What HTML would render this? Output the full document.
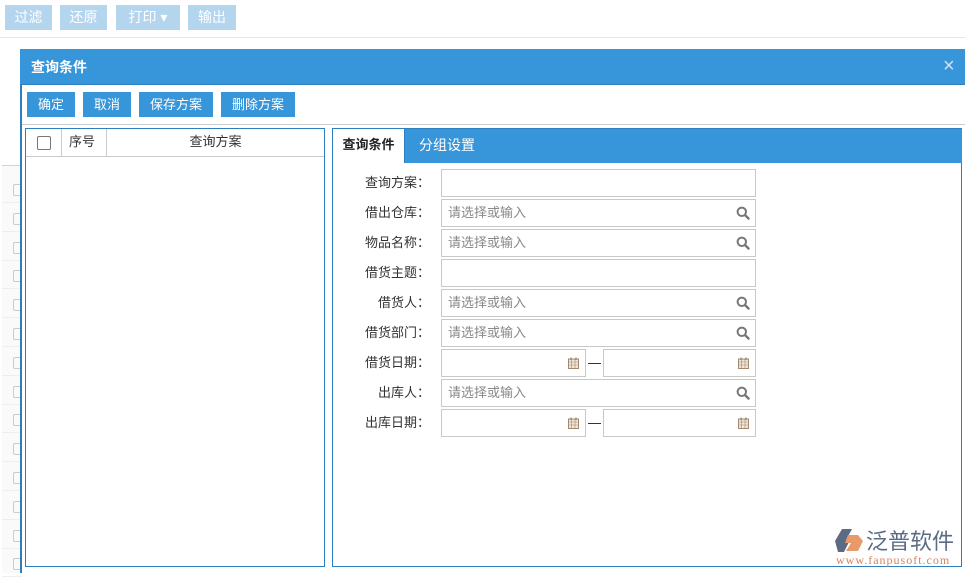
<!DOCTYPE html>
<html><head><meta charset="utf-8"><style>
*{box-sizing:border-box;margin:0;padding:0}
body{width:965px;height:573px;overflow:hidden;background:#fff;position:relative;font-family:"Liberation Sans","Noto Sans CJK SC",sans-serif;font-size:13px;color:#333}
.a{position:absolute}
.tb{position:absolute;top:5px;height:25px;background:#b4d5ee;color:#fff;font-size:14px;line-height:25px;text-align:center}
.btn{position:absolute;top:92px;height:25px;background:#3795d9;color:#fff;font-size:13px;line-height:25px;text-align:center}
.lbl{position:absolute;left:340px;width:90px;text-align:right;font-size:13px;color:#333;line-height:28px}
.in{position:absolute;height:28px;border:1px solid #c8c8c8;background:#fff;color:#888;font-size:13px;line-height:26px;padding-left:6px}
.ic{position:absolute;right:5px;top:6px}
</style></head><body>
<div class="tb" style="left:5px;width:47px">过滤</div>
<div class="tb" style="left:60px;width:47px">还原</div>
<div class="tb" style="left:116px;width:64px">打印 ▾</div>
<div class="tb" style="left:188px;width:48px">输出</div>
<div class="a" style="left:0;top:37px;width:965px;height:1px;background:#e6e6e6"></div>
<div class="a" style="left:2px;top:165px;width:20px;height:408px;background:#fafafa;border-top:1px solid #bcd9ef"></div>
<div id="rows"></div>
<script>
var r='';for(var i=0;i<14;i++){var y=180+i*28.8;r+='<div class="a" style="left:13px;top:'+(y+4)+'px;width:9px;height:12px;border:1px solid #ccc;border-right:none;border-radius:2px 0 0 2px"></div><div class="a" style="left:2px;top:'+(y+22)+'px;width:20px;height:1px;background:#eee"></div>';}
document.getElementById('rows').innerHTML=r;
</script>
<div class="a" style="left:20px;top:49px;width:945px;height:524px;background:#fff;border-left:2px solid #2e7fc0"></div>
<div class="a" style="left:20px;top:49px;width:945px;height:36px;background:#3795d9;border-bottom:1px solid #2e7fc0"></div>
<div class="a" style="left:31px;top:57px;color:#fff;font-weight:bold;font-size:14px;line-height:20px">查询条件</div>
<div class="a" style="left:943px;top:55px;color:#cfe4f5;font-size:20px;line-height:22px">×</div>
<div class="btn" style="left:27px;width:48px">确定</div>
<div class="btn" style="left:83px;width:48px">取消</div>
<div class="btn" style="left:139px;width:74px">保存方案</div>
<div class="btn" style="left:221px;width:74px">删除方案</div>
<div class="a" style="left:22px;top:124px;width:943px;height:1px;background:#ccc"></div>
<div class="a" style="left:25px;top:128px;width:300px;height:439px;border:1px solid #2e7fc0"></div>
<div class="a" style="left:26px;top:156px;width:298px;height:1px;background:#ccc"></div>
<div class="a" style="left:61px;top:129px;width:1px;height:27px;background:#ccc"></div>
<div class="a" style="left:106px;top:129px;width:1px;height:27px;background:#ccc"></div>
<div class="a" style="left:37px;top:136px;width:14px;height:14px;border:1px solid #777;border-radius:2px"></div>
<div class="a" style="left:69px;top:133px;line-height:18px">序号</div>
<div class="a" style="left:107px;width:217px;top:133px;line-height:18px;text-align:center">查询方案</div>
<div class="a" style="left:332px;top:128px;width:630px;height:439px;border:1px solid #2e7fc0"></div>
<div class="a" style="left:333px;top:129px;width:629px;height:34px;background:#3795d9"></div>
<div class="a" style="left:333px;top:129px;width:72px;height:34px;background:#fff;border-right:1px solid #2e7fc0;font-weight:bold;text-align:center;line-height:32px;color:#222">查询条件</div>
<div class="a" style="left:419px;top:129px;color:#fff;font-size:14px;line-height:32px">分组设置</div>
<div id="f"></div>
<script>
var L=['查询方案','借出仓库','物品名称','借货主题','借货人','借货部门','借货日期','出库人','出库日期'];
var T=['n','s','s','n','s','s','d','s','d'];
var mag='<svg class="ic" width="14" height="14" viewBox="0 0 14 14"><circle cx="5.8" cy="5.8" r="4.2" fill="none" stroke="#777" stroke-width="2"/><path d="M9 9l3.5 3.5" stroke="#777" stroke-width="2.4" stroke-linecap="round"/></svg>';
var cal='<svg class="ic" style="top:7px;right:6px" width="11" height="12" viewBox="0 0 11 12"><rect x="0.5" y="2" width="10" height="9.5" fill="#f3e6d8" stroke="#a0896f"/><path d="M0.5 5h10M0.5 8h10M3.5 2v9.5M7 2v9.5" stroke="#a0896f" stroke-width=".6"/><path d="M3 0.5v2.5M8 0.5v2.5" stroke="#777"/></svg>';
var h='';for(var i=0;i<9;i++){var y=169+i*30;h+='<div class="lbl" style="top:'+y+'px">'+L[i]+'：</div>';
if(T[i]=='d'){h+='<div class="in" style="left:441px;top:'+y+'px;width:145px">'+cal+'</div><div class="a" style="left:588px;top:'+(y+14)+'px;width:13px;height:1px;background:#333"></div><div class="in" style="left:603px;top:'+y+'px;width:153px">'+cal+'</div>';}
else h+='<div class="in" style="left:441px;top:'+y+'px;width:315px">'+(T[i]=='s'?'请选择或输入'+mag:'')+'</div>';}
document.getElementById('f').innerHTML=h;
</script>
<svg class="a" style="left:835px;top:528px" width="28" height="26" viewBox="0 0 28 26"><path d="M7 1h10l-6 11 4 0-6 12H3L0 13z" fill="#5b6b84"/><path d="M13 7h10l5 6-5 10h-12l5-8h-6z" fill="#e89a6a"/></svg>
<div class="a" style="left:866px;top:526px;font-size:22px;color:#5b6b84;line-height:28px;font-family:'Noto Sans CJK SC',sans-serif">泛普软件</div>
<div class="a" style="left:836px;top:554px;font-size:12px;letter-spacing:1px;color:#d8825a;font-family:'Liberation Serif',serif;line-height:13px">www.fanpusoft.com</div>
</body></html>
